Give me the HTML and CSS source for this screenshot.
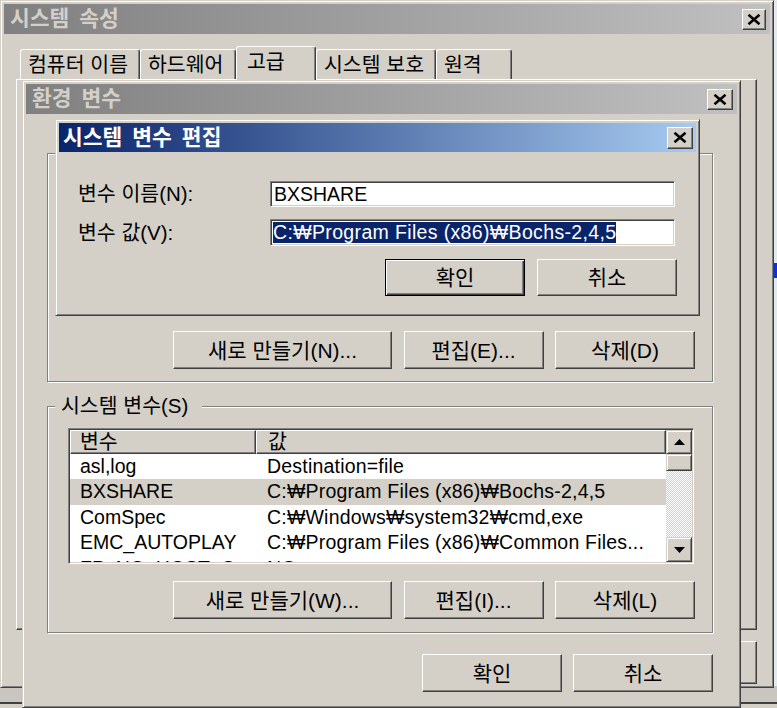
FILE: index.html
```html
<!DOCTYPE html>
<html lang="ko">
<head>
<meta charset="utf-8">
<title>시스템 변수 편집</title>
<link rel="stylesheet" href="styles.css">
</head>
<body>
<div class="desk">
  <div class="backwin"></div>
  <div class="peek"></div>

  <!-- 시스템 속성 -->
  <div class="win sys">
    <div class="titlebar inactive">
      <span class="ttext">시스템 속성</span>
      <button class="xbtn"><svg width="14" height="11" viewBox="0 0 14 11"><path d="M1.5 0.8L12.5 10.2M12.5 0.8L1.5 10.2" stroke="#000" stroke-width="2.6"/></svg></button>
    </div>
    <div class="sysbody">
      <div class="tabs">
        <div class="tab w120">컴퓨터 이름</div>
        <div class="tab w96">하드웨어</div>
        <div class="tab sel w80">고급</div>
        <div class="tab w120">시스템 보호</div>
        <div class="tab w76">원격</div>
      </div>
      <div class="tabpage"></div>
      <div class="sysbtns">
        <button class="btn sysbtn"></button>
        <button class="btn sysbtn"></button>
        <button class="btn sysbtn"></button>
      </div>
    </div>
  </div>

  <!-- 환경 변수 -->
  <div class="win env">
    <div class="titlebar inactive">
      <span class="ttext">환경 변수</span>
      <button class="xbtn envx"><svg width="14" height="11" viewBox="0 0 14 11"><path d="M1.5 0.8L12.5 10.2M12.5 0.8L1.5 10.2" stroke="#000" stroke-width="2.6"/></svg></button>
    </div>
    <div class="envbody">
      <div class="grp user">
        <div class="lv lv-user"><div class="lv-main"></div></div>
        <div class="btnrow">
          <button class="btn bnew">새로 만들기(N)...</button>
          <button class="btn bsm">편집(E)...</button>
          <button class="btn bsm">삭제(D)</button>
        </div>
      </div>

      <div class="grp system">
        <span class="grp-label">시스템 변수(S)</span>
        <div class="lv">
          <div class="lv-main">
            <div class="lv-head"><div class="hcell">변수</div><div class="hcell c2">값</div></div>
            <div class="lv-row"><span class="c1">asl,log</span><span class="c2">Destination=file</span></div>
            <div class="lv-row selrow"><span class="c1">BXSHARE</span><span class="c2">C:₩Program Files (x86)₩Bochs-2,4,5</span></div>
            <div class="lv-row"><span class="c1">ComSpec</span><span class="c2">C:₩Windows₩system32₩cmd,exe</span></div>
            <div class="lv-row"><span class="c1">EMC_AUTOPLAY</span><span class="c2">C:₩Program Files (x86)₩Common Files...</span></div>
            <div class="lv-row"><span class="c1">FP_NO_HOST_C...</span><span class="c2">NO</span></div>
          </div>
          <div class="vscroll">
            <div class="sb-btn up"><svg width="11" height="6" viewBox="0 0 11 6"><polygon points="5.5,0 11,6 0,6" fill="#000"/></svg></div>
            <div class="sb-thumb"></div>
            <div class="sb-track"></div>
            <div class="sb-btn down"><svg width="11" height="6" viewBox="0 0 11 6"><polygon points="0,0 11,0 5.5,6" fill="#000"/></svg></div>
          </div>
        </div>
        <div class="btnrow">
          <button class="btn bnew">새로 만들기(W)...</button>
          <button class="btn bsm">편집(I)...</button>
          <button class="btn bsm">삭제(L)</button>
        </div>
      </div>

      <div class="okrow">
        <button class="btn bsm">확인</button>
        <button class="btn bsm">취소</button>
      </div>
    </div>
  </div>

  <!-- 시스템 변수 편집 -->
  <div class="win edit">
    <div class="titlebar active">
      <span class="ttext">시스템 변수 편집</span>
      <button class="xbtn editx"><svg width="14" height="11" viewBox="0 0 14 11"><path d="M1.5 0.8L12.5 10.2M12.5 0.8L1.5 10.2" stroke="#000" stroke-width="2.6"/></svg></button>
    </div>
    <div class="editbody">
      <div class="form">
        <label class="flabel">변수 이름(N):</label>
        <div class="field f1">BXSHARE</div>
        <label class="flabel">변수 값(V):</label>
        <div class="field f2"><span class="seltext">C:₩Program Files (x86)₩Bochs-2,4,5</span></div>
      </div>
      <div class="editbtns">
        <button class="btn bsm default">확인</button>
        <button class="btn bsm">취소</button>
      </div>
    </div>
  </div>
</div>
</body>
</html>
```
FILE: styles.css
```css
* { box-sizing: border-box; }
html, body { margin: 0; padding: 0; }
body {
  background: #e2eaee;
  font-family: "Liberation Sans", "Noto Sans CJK KR", sans-serif;
  font-size: 20.5px;
  color: #000;
  overflow: hidden;
}
.desk { position: relative; width: 777px; height: 708px; overflow: hidden; }

.backwin {
  position: absolute; left: 0; top: 686px; width: 777px; height: 22px;
  background: linear-gradient(#c9c6bf 0 16px, #404040 16px 18px, #d4d0c8 18px);
}
.peek { position: absolute; left: 774px; top: 263px; width: 3px; height: 15px; background: #1030d0; }

/* windows */
.win {
  position: absolute;
  background: #d4d0c8;
  border: 1px solid;
  border-color: #d4d0c8 #404040 #404040 #d4d0c8;
  box-shadow: inset 1px 1px #fff, inset -1px -1px #808080;
  padding: 3px;
  display: flex;
  flex-direction: column;
}
.sys { left: 0; top: 0; width: 774px; height: 688px; }
.env { left: 22px; top: 80px; width: 719px; height: 628px; }
.edit { left: 55px; top: 119px; width: 645px; height: 197px; }

.titlebar {
  height: 30px; flex-shrink: 0;
  display: flex; align-items: center; justify-content: space-between;
  padding: 0 4px 0 6px;
}
.edit .titlebar { height: 29px; padding: 0 3px 0 4px; }
.titlebar.inactive { background: linear-gradient(to right, #808080, #c0c0c0); color: #d4d0c8; }
.titlebar.active { background: linear-gradient(to right, #0a246a, #a6caf0); color: #fff; }
.ttext { font-weight: bold; font-size: 21.5px; line-height: 22px; word-spacing: 4px; white-space: nowrap; }

button { font: inherit; color: inherit; margin: 0; padding: 0; }
.xbtn {
  width: 24px; height: 21px;
  display: flex; align-items: center; justify-content: center;
  background: #d4d0c8;
  border: 1px solid; border-color: #fff #404040 #404040 #fff;
  box-shadow: inset -1px -1px #808080;
}
.envx { width: 26px; }
.editx { width: 26px; height: 22px; }

/* buttons */
.btn {
  display: flex; align-items: center; justify-content: center;
  background: #d4d0c8;
  border: 1px solid; border-color: #fff #404040 #404040 #fff;
  box-shadow: inset -1px -1px #808080;
  font-size: 21px; line-height: 1; white-space: nowrap;
  color: #000;
}
.btn.default {
  border-color: #000;
  box-shadow: inset 1px 1px #fff, inset -1px -1px #404040, inset -2px -2px #808080;
}
.bsm { width: 140px; height: 38px; }
.bnew { width: 219px; height: 38px; }

/* system properties body */
.sysbody { flex: 1; display: flex; flex-direction: column; padding: 12px 13px 0 12px; }
.tabs { display: flex; align-items: flex-end; height: 33px; padding-left: 4px; position: relative; z-index: 1; }
.tab {
  height: 30px;
  border: 1px solid #fff; border-bottom: none; border-right-color: #404040;
  box-shadow: inset -1px 0 #808080;
  border-radius: 3px 3px 0 0;
  padding-left: 7px;
  display: flex; align-items: center;
  font-size: 20.5px; line-height: 20px; white-space: nowrap;
  background: #d4d0c8;
}
.tab.sel { height: 34px; margin-bottom: -1px; padding-left: 10px; padding-bottom: 3px; }
.w120 { width: 120px; } .w96 { width: 96px; } .w80 { width: 80px; } .w76 { width: 76px; }
.tabpage {
  height: 551px;
  border: 1px solid; border-color: #fff #404040 #404040 #fff;
  box-shadow: inset -1px -1px #808080;
}
.sysbtns { display: flex; justify-content: flex-end; gap: 11px; margin-top: 11px; }
.sysbtn { width: 140px; height: 43px; }

/* environment variables */
.envbody { display: flex; flex-direction: column; padding: 0 24px 0 21px; }
.grp {
  position: relative;
  border: 1px solid #808080;
  box-shadow: inset 1px 1px #fff, 1px 1px #fff;
  padding: 21px 18px 12px 20px;
}
.grp.user { margin-top: 39px; }
.grp.system { margin-top: 24px; padding-bottom: 13px; }
.grp-label {
  position: absolute; left: 7px; top: -12px;
  height: 22px; line-height: 22px;
  padding: 0 14px 0 6px;
  background: #d4d0c8;
  font-size: 20.5px; white-space: nowrap;
}
.btnrow { display: flex; justify-content: flex-end; gap: 11.5px; margin-top: 17px; margin-right: -1px; }
.grp.user .btnrow { margin-top: 19px; }
.okrow { display: flex; justify-content: flex-end; gap: 11px; margin-top: 21px; }

/* list view */
.lv {
  height: 136px;
  display: flex;
  background: #fff;
  border: 1px solid; border-color: #808080 #fff #fff #808080;
  box-shadow: inset 1px 1px #404040, inset -1px -1px #d4d0c8;
  padding: 1px;
}
.lv-user { height: 137px; }
.lv-main { flex: 1; overflow: hidden; }
.lv-head { display: grid; grid-template-columns: 186px 1fr; height: 24px; }
.hcell {
  background: #d4d0c8;
  border: 1px solid; border-color: #fff #404040 #404040 #fff;
  box-shadow: inset -1px -1px #808080;
  padding-left: 9px;
  font-size: 20.5px; line-height: 21px; white-space: nowrap;
}
.hcell.c2 { padding-left: 11px; }
.lv-row {
  display: grid; grid-template-columns: 186px 1fr;
  height: 25.4px; line-height: 25.4px;
  font-size: 19.5px; white-space: nowrap;
}
.lv-row .c1 { padding-left: 10px; overflow: hidden; text-overflow: ellipsis; }
.lv-row .c2 { padding-left: 11px; overflow: hidden; letter-spacing: 0.2px; }
.selrow { background: #d4d0c8; }

.vscroll { width: 26px; display: flex; flex-direction: column; }
.sb-btn, .sb-thumb {
  background: #d4d0c8;
  border: 1px solid; border-color: #d4d0c8 #404040 #404040 #d4d0c8;
  box-shadow: inset 1px 1px #fff, inset -1px -1px #808080;
}
.sb-btn { display: flex; align-items: center; justify-content: center; }
.sb-btn.up { height: 24px; }
.sb-btn.down { height: 25px; }
.sb-thumb { height: 17px; }
.sb-track {
  flex: 1;
  background: repeating-conic-gradient(#fff 0 25%, #d4d0c8 0 50%) 0 0 / 2px 2px;
}

/* edit dialog */
.editbody { padding: 29px 21px 16px 19px; display: flex; flex-direction: column; }
.form { display: grid; grid-template-columns: 192px 1fr; row-gap: 12px; align-items: center; }
.flabel { font-size: 20.5px; line-height: 22px; white-space: nowrap; }
.field {
  background: #fff;
  border: 1px solid; border-color: #808080 #fff #fff #808080;
  box-shadow: inset 1px 1px #404040, inset -1px -1px #d4d0c8;
  padding-left: 3px;
  font-size: 19.5px; white-space: nowrap; overflow: hidden;
  display: flex; align-items: center;
}
.f1 { height: 26px; }
.f2 { height: 27px; padding-left: 2px; letter-spacing: 0.35px; }
.seltext { background: #0a246a; color: #fff; line-height: 21px; display: inline-block; }
.editbtns { display: flex; justify-content: flex-end; gap: 12px; margin-top: 13px; margin-right: -2px; }
.editbtns .bsm { height: 37px; }
```
